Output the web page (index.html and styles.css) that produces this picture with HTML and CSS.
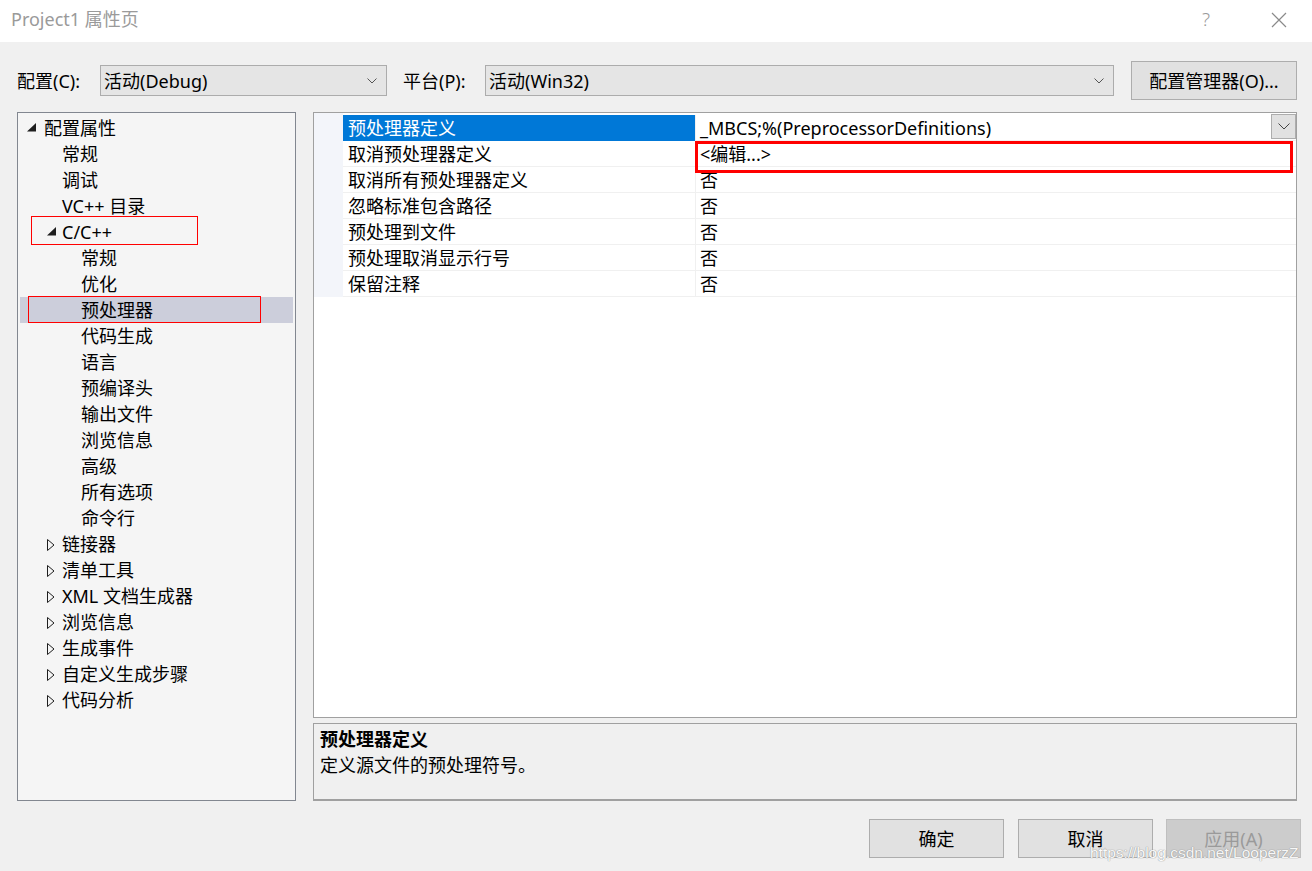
FILE: index.html
```html
<!DOCTYPE html>
<html>
<head>
    <meta charset="UTF-8">
    <title>Project1 属性页</title>
    <link rel="stylesheet" href="styles.css">
</head>
<body>
    <!-- Title bar -->
    <div class="titlebar">
        <span class="title">Project1 属性页</span>
        <span class="help">?</span>
        <svg class="close" width="16" height="16" viewBox="0 0 16 16">
            <path d="M1 1 L15 15 M15 1 L1 15" stroke="#8a8a8a" stroke-width="1.2" fill="none"/>
        </svg>
    </div>

    <div class="main">
        <!-- Configuration row -->
        <div class="config-row">
            <label class="cfg-label">配置(C):</label>
            <div class="select select-config">
                <span>活动(Debug)</span>
                <svg width="10" height="6" viewBox="0 0 10 6"><path d="M0.5 0.5 L5 5 L9.5 0.5" stroke="#555" fill="none"/></svg>
            </div>
            <label class="cfg-label cfg-label-platform">平台(P):</label>
            <div class="select select-platform">
                <span>活动(Win32)</span>
                <svg width="10" height="6" viewBox="0 0 10 6"><path d="M0.5 0.5 L5 5 L9.5 0.5" stroke="#555" fill="none"/></svg>
            </div>
            <button class="btn btn-manager">配置管理器(O)...</button>
        </div>

        <!-- Panels -->
        <div class="panels">
            <div class="tree">
                <div class="node lvl0"><span class="tw"><svg width="10" height="9" viewBox="0 0 10 9"><path d="M0 8.5 L9 0 L9 8.5 Z" fill="#1e1e1e"/></svg></span>配置属性</div>
                <div class="node lvl1">常规</div>
                <div class="node lvl1">调试</div>
                <div class="node lvl1">VC++ 目录</div>
                <div class="node lvl1"><span class="tw"><svg width="10" height="9" viewBox="0 0 10 9"><path d="M0 8.5 L9 0 L9 8.5 Z" fill="#1e1e1e"/></svg></span>C/C++</div>
                <div class="node lvl2">常规</div>
                <div class="node lvl2">优化</div>
                <div class="node lvl2 selected">预处理器</div>
                <div class="node lvl2">代码生成</div>
                <div class="node lvl2">语言</div>
                <div class="node lvl2">预编译头</div>
                <div class="node lvl2">输出文件</div>
                <div class="node lvl2">浏览信息</div>
                <div class="node lvl2">高级</div>
                <div class="node lvl2">所有选项</div>
                <div class="node lvl2">命令行</div>
                <div class="node lvl1"><span class="tw"><svg width="8" height="12" viewBox="0 0 8 12"><path d="M0.5 0.5 L7 6 L0.5 11.5 Z" stroke="#1e1e1e" fill="none"/></svg></span>链接器</div>
                <div class="node lvl1"><span class="tw"><svg width="8" height="12" viewBox="0 0 8 12"><path d="M0.5 0.5 L7 6 L0.5 11.5 Z" stroke="#1e1e1e" fill="none"/></svg></span>清单工具</div>
                <div class="node lvl1"><span class="tw"><svg width="8" height="12" viewBox="0 0 8 12"><path d="M0.5 0.5 L7 6 L0.5 11.5 Z" stroke="#1e1e1e" fill="none"/></svg></span>XML 文档生成器</div>
                <div class="node lvl1"><span class="tw"><svg width="8" height="12" viewBox="0 0 8 12"><path d="M0.5 0.5 L7 6 L0.5 11.5 Z" stroke="#1e1e1e" fill="none"/></svg></span>浏览信息</div>
                <div class="node lvl1"><span class="tw"><svg width="8" height="12" viewBox="0 0 8 12"><path d="M0.5 0.5 L7 6 L0.5 11.5 Z" stroke="#1e1e1e" fill="none"/></svg></span>生成事件</div>
                <div class="node lvl1"><span class="tw"><svg width="8" height="12" viewBox="0 0 8 12"><path d="M0.5 0.5 L7 6 L0.5 11.5 Z" stroke="#1e1e1e" fill="none"/></svg></span>自定义生成步骤</div>
                <div class="node lvl1"><span class="tw"><svg width="8" height="12" viewBox="0 0 8 12"><path d="M0.5 0.5 L7 6 L0.5 11.5 Z" stroke="#1e1e1e" fill="none"/></svg></span>代码分析</div>

                <!-- annotation boxes -->
                <div class="mark mark-cpp"></div>
                <div class="mark mark-pre"></div>
            </div>

            <div class="right">
                <div class="grid">
                    <div class="row">
                        <div class="gutter"></div>
                        <div class="name active">预处理器定义</div>
                        <div class="value">
                            <span>_MBCS;%(PreprocessorDefinitions)</span>
                            <span class="drop"><svg width="12" height="7" viewBox="0 0 12 7"><path d="M0.5 0.5 L6 6 L11.5 0.5" stroke="#444" fill="none"/></svg></span>
                        </div>
                    </div>
                    <div class="row">
                        <div class="gutter"></div>
                        <div class="name">取消预处理器定义</div>
                        <div class="value">&lt;编辑...&gt;</div>
                    </div>
                    <div class="row">
                        <div class="gutter"></div>
                        <div class="name">取消所有预处理器定义</div>
                        <div class="value">否</div>
                    </div>
                    <div class="row">
                        <div class="gutter"></div>
                        <div class="name">忽略标准包含路径</div>
                        <div class="value">否</div>
                    </div>
                    <div class="row">
                        <div class="gutter"></div>
                        <div class="name">预处理到文件</div>
                        <div class="value">否</div>
                    </div>
                    <div class="row">
                        <div class="gutter"></div>
                        <div class="name">预处理取消显示行号</div>
                        <div class="value">否</div>
                    </div>
                    <div class="row">
                        <div class="gutter"></div>
                        <div class="name">保留注释</div>
                        <div class="value">否</div>
                    </div>

                    <div class="mark mark-edit"></div>
                </div>

                <div class="desc">
                    <div class="desc-title">预处理器定义</div>
                    <div class="desc-text">定义源文件的预处理符号。</div>
                </div>
            </div>
        </div>
    </div>

    <!-- Bottom buttons -->
    <div class="footer">
        <button class="btn btn-ok">确定</button>
        <button class="btn btn-cancel">取消</button>
        <button class="btn btn-apply" disabled>应用(A)</button>
        <span class="watermark">https://blog.csdn.net/LooperzZ</span>
    </div>
</body>
</html>
```

FILE: styles.css
```css
* {
    box-sizing: border-box;
}
body {
    margin: 0;
    width: 1312px;
    height: 871px;
    overflow: hidden;
    background-color: #f0f0f0;
    font-family: "Noto Sans", "Noto Sans CJK SC", sans-serif;
    font-size: 18px;
    color: #000;
}
.titlebar {
    height: 42px;
    background-color: #fff;
    display: flex;
    align-items: center;
    padding-left: 11px;
    position: relative;
}
.title {
    color: #9a9a9a;
    font-size: 18px;
    line-height: 24px;
    margin-top: -4px;
}
.help {
    position: absolute;
    left: 1202px;
    top: 6px;
    color: #9a9a9a;
    font-size: 19px;
    font-weight: 300;
}
.close {
    position: absolute;
    left: 1271px;
    top: 12px;
}
.main {
    padding: 0 15px 0 17px;
}
.config-row {
    display: flex;
    align-items: center;
    height: 39px;
    margin-top: 19px;
}
.cfg-label {
    width: 83px;
    line-height: 24px;
}
.cfg-label-platform {
    width: 82px;
    margin-left: 16px;
}
.select {
    height: 31px;
    background-color: #e5e5e5;
    border: 1px solid #acacac;
    display: flex;
    align-items: center;
    justify-content: space-between;
    padding: 0 9px 0 3px;
    line-height: 24px;
}
.select-config {
    width: 287px;
}
.select-platform {
    width: 629px;
}
.btn {
    font-family: "Noto Sans", "Noto Sans CJK SC", sans-serif;
    font-size: 18px;
    color: #000;
    background-color: #e1e1e1;
    border: 1px solid #adadad;
    height: 39px;
    padding: 0;
    line-height: 24px;
}
.btn-manager {
    width: 166px;
    margin-left: 17px;
}
.panels {
    display: flex;
    margin-top: 12px;
}
.tree {
    position: relative;
    width: 279px;
    height: 689px;
    background-color: #f5f5f5;
    border: 1px solid #828790;
    padding: 2px 2px 0 2px;
}
.node {
    height: 26px;
    line-height: 26px;
    display: flex;
    align-items: center;
    white-space: nowrap;
}
.node.lvl0 {
    padding-left: 24px;
}
.node.lvl1 {
    padding-left: 42px;
}
.node.lvl2 {
    padding-left: 61px;
}
.node.selected {
    background-color: #cccedb;
}
.tw {
    width: 0;
    position: relative;
    display: inline-block;
    height: 26px;
}
.tw svg {
    position: absolute;
}
.lvl0 .tw svg {
    left: -17px;
    top: 8px;
}
.lvl1 .tw svg {
    left: -15px;
    top: 8px;
}
.mark {
    position: absolute;
    border: 1px solid #ff0000;
}
.mark-cpp {
    left: 13px;
    top: 103px;
    width: 167px;
    height: 29px;
}
.mark-pre {
    left: 10px;
    top: 183px;
    width: 233px;
    height: 27px;
}
.right {
    margin-left: 17px;
    width: 984px;
    display: flex;
    flex-direction: column;
}
.grid {
    position: relative;
    height: 606px;
    background-color: #fff;
    border: 1px solid #a0a0a0;
    padding-top: 2px;
}
.grid::before {
    content: "";
    position: absolute;
    left: 0;
    top: 0;
    width: 29px;
    height: 184px;
    background-color: #f3f5fa;
}
.row {
    display: flex;
    height: 26px;
    line-height: 26px;
    position: relative;
}
.gutter {
    width: 29px;
}
.name {
    width: 352px;
    padding-left: 5px;
    border-bottom: 1px solid #f0f0f0;
    white-space: nowrap;
}
.name.active {
    background-color: #0078d7;
    color: #fff;
    border-bottom-color: #0078d7;
}
.value {
    flex: 1;
    padding-left: 4px;
    border-left: 1px solid #f0f0f0;
    border-bottom: 1px solid #f0f0f0;
    display: flex;
    justify-content: space-between;
    white-space: nowrap;
}
.drop {
    width: 25px;
    height: 25px;
    margin-top: -1px;
    background-color: #e1e1e1;
    border: 1px solid #adadad;
    display: flex;
    align-items: center;
    justify-content: center;
}
.mark-edit {
    left: 381px;
    top: 28px;
    width: 598px;
    height: 32px;
    border: 3px solid #ff0000;
}
.desc {
    margin-top: 5px;
    height: 78px;
    background-color: #f0f0f0;
    border: 1px solid #a0a0a0;
    border-bottom-width: 2px;
    padding: 2px 6px;
    line-height: 26px;
}
.desc-title {
    font-weight: bold;
}
.footer {
    position: relative;
    display: flex;
    justify-content: flex-end;
    gap: 14px;
    padding-right: 11px;
    margin-top: 18px;
}
.btn-ok, .btn-cancel, .btn-apply {
    width: 135px;
}
.btn-apply {
    background-color: #cccccc;
    border-color: #bfbfbf;
    color: #9a9a9a;
    margin-left: -1px;
}
.watermark {
    position: absolute;
    left: 1090px;
    top: 25px;
    font-family: "Liberation Sans", sans-serif;
    font-size: 15.5px;
    color: #ffffff;
    text-shadow: 0 0 1px #888, 0 0 1px #888;
    opacity: 0.85;
}
```
